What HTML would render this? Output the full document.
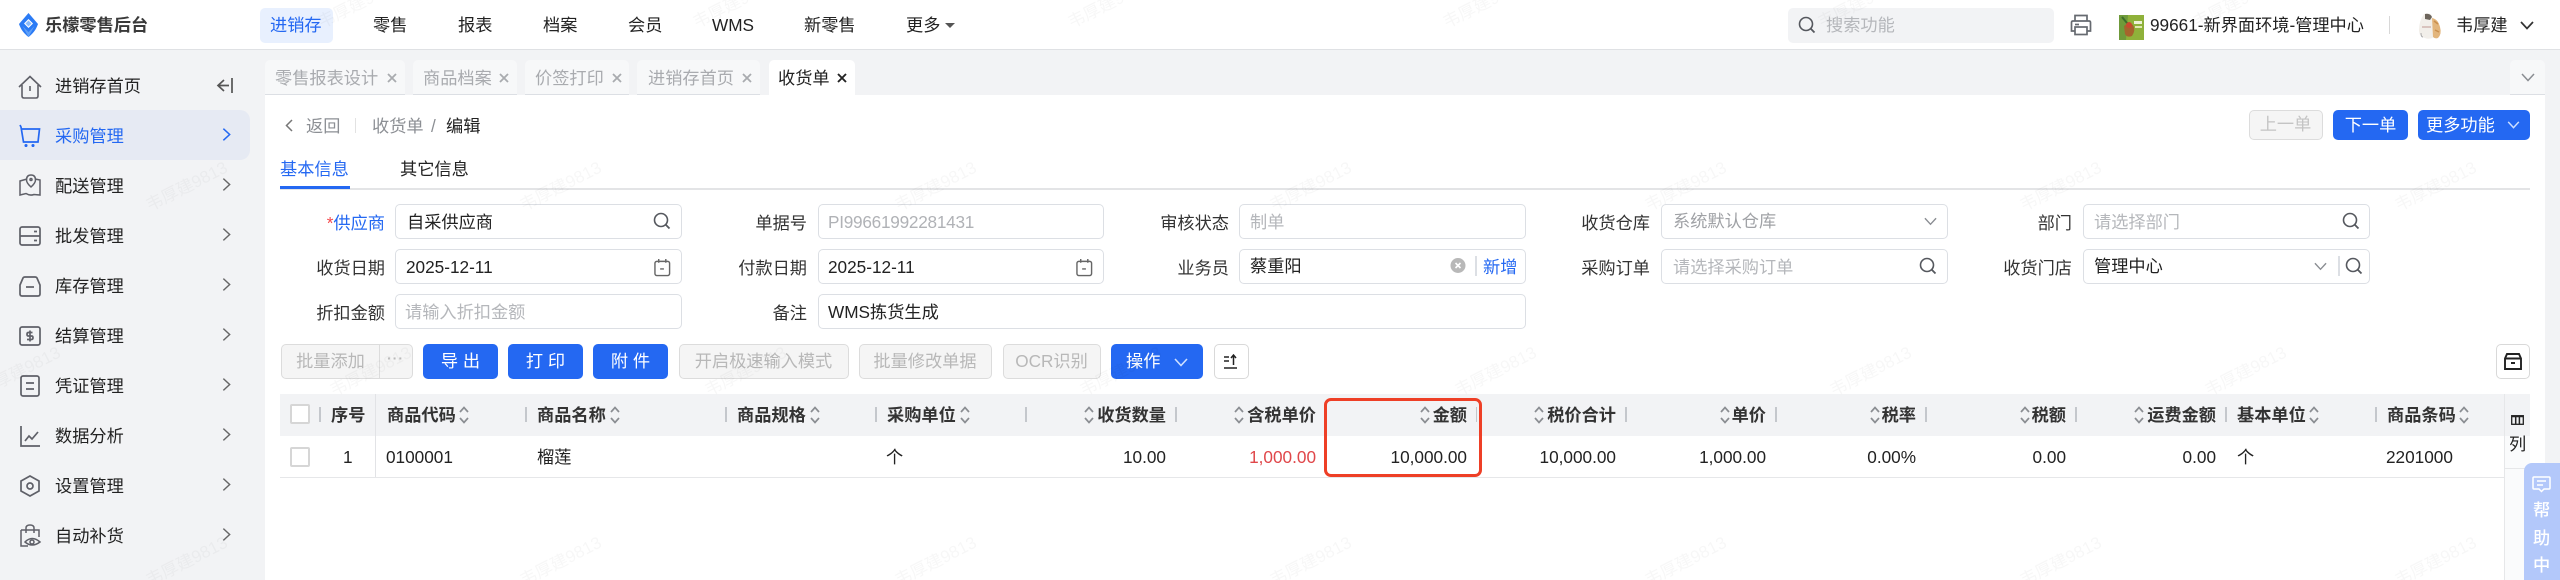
<!DOCTYPE html>
<html lang="zh-CN"><head><meta charset="utf-8"><title>收货单</title>
<style>
*{box-sizing:border-box;margin:0;padding:0}
html,body{width:2560px;height:580px;overflow:hidden;background:#fff}
body{position:relative;font-family:"Liberation Sans","Noto Sans CJK SC",sans-serif;font-size:17.2px;color:#222}
.a{position:absolute}
.t{position:absolute;white-space:nowrap;line-height:24px;height:24px}
.i{position:absolute;overflow:visible;fill:none}
.inp{position:absolute;height:35px;border:1.5px solid #dcdfe4;border-radius:5px;background:#fff}
.g{color:#b5b7bb}
.b{position:absolute;top:344px;height:35px;border-radius:5px;background:#2468f2;color:#fff;text-align:center;line-height:35px;white-space:nowrap}
.d{position:absolute;top:344px;height:35px;border-radius:5px;background:#f5f5f5;border:1.5px solid #dcdcdc;color:#b8b8b8;text-align:center;line-height:32px;white-space:nowrap}
.tab{position:absolute;top:60px;height:35px;background:#f7f8f9;border-bottom:1.5px solid #dcdfe4;border-radius:5px 5px 0 0}
.h{position:absolute;top:403px;font-weight:700;color:#333;line-height:24px;white-space:nowrap}
.c{position:absolute;top:445px;line-height:24px;white-space:nowrap;color:#222}
.sp{position:absolute;top:407px;width:1.5px;height:15px;background:#c4c7cc}
.cb{position:absolute;left:290px;width:20px;height:20px;background:#fff;border:2px solid #d6d6d6;border-radius:2px}
.wm{position:absolute;font-size:17px;color:rgba(30,30,40,.035);transform:rotate(-27deg);white-space:nowrap;line-height:20px;width:100px;text-align:center;pointer-events:none}
</style></head><body>
<svg width="0" height="0" style="position:absolute"><defs>
<symbol id="s" viewBox="0 0 10 20"><path d="M1 7L5 2.500L9 7M1 13L5 17.500L9 13" fill="none" stroke="#8a8d92" stroke-width="1.700"/></symbol>
<symbol id="q" viewBox="0 0 18 18"><circle cx="8" cy="8" r="6.500" fill="none" stroke="#55585e" stroke-width="1.600"/><path d="M12.800 12.800L16.500 16.500" stroke="#55585e" stroke-width="1.800" fill="none"/></symbol>
<symbol id="cal" viewBox="0 0 18 20"><rect x="1" y="3.500" width="15.500" height="15" rx="2" fill="none" stroke="#666" stroke-width="1.500"/><path d="M5 1v4M12.500 1v4M6.500 11.500h4" stroke="#666" stroke-width="1.500" fill="none"/></symbol>
<symbol id="ch" viewBox="0 0 10 16"><path d="M1.500 1.500L8.500 8L1.500 14.500" fill="none" stroke="#666" stroke-width="1.600"/></symbol>
<symbol id="dn" viewBox="0 0 14 9"><path d="M1 1L7 7.500L13 1" fill="none" stroke="#8a8d92" stroke-width="1.500"/></symbol>
</defs></svg>

<!-- sidebar and backgrounds -->
<div class="a" style="left:0;top:50px;width:2560px;height:530px;background:#f2f3f5"></div>
<div class="a" style="left:265px;top:95px;width:2280px;height:485px;background:#fff"></div>
<div class="a" style="left:0;top:0;width:2560px;height:50px;background:#fff;border-bottom:1.500px solid #dfe1e4"></div>

<!-- header -->
<svg class="i" style="left:19px;top:13px" width="19" height="24" viewBox="0 0 19 24"><path d="M9.500 0L19 11C17 17 13.500 21 9.500 24C5.500 21 2 17 0 11Z" fill="#2b7bf5"/><path d="M9.500 6L14 10.500L9.500 15L5 10.500Z" fill="#fff"/><path d="M9.500 7.500L12.500 10.500L9.500 13.500L6.500 10.500Z" fill="#8dbcfb"/><path d="M3.500 13L9.500 19L15.500 13L9.500 24Z" fill="#5d9ff8"/></svg>
<div class="t" style="left:45px;top:13px;font-weight:700;color:#3a3a3a">乐檬零售后台</div>
<div class="a" style="left:260px;top:8px;width:73px;height:35px;background:#e8f0fe;border-radius:5px"></div>
<div class="t" style="left:270px;top:13px;color:#2468f2">进销存</div>
<div class="t" style="left:373px;top:13px">零售</div>
<div class="t" style="left:458px;top:13px">报表</div>
<div class="t" style="left:543px;top:13px">档案</div>
<div class="t" style="left:628px;top:13px">会员</div>
<div class="t" style="left:712px;top:13px">WMS</div>
<div class="t" style="left:804px;top:13px">新零售</div>
<div class="t" style="left:906px;top:13px">更多</div>
<svg class="i" style="left:945px;top:23px" width="10" height="5" viewBox="0 0 10 5"><path d="M0 0H10L5 5Z" fill="#555"/></svg>
<div class="a" style="left:1788px;top:8px;width:266px;height:35px;background:#f2f3f5;border-radius:5px"></div>
<svg class="i" style="left:1798px;top:16px" width="18" height="18"><use href="#q"/></svg>
<div class="t g" style="left:1826px;top:13px">搜索功能</div>
<svg class="i" style="left:2070px;top:14px" width="22" height="22" viewBox="0 0 22 22" fill="none" stroke="#666a70" stroke-width="1.700"><path d="M5 7V1.500H17V7"/><path d="M5 17H1.500V8.500Q1.500 7 3 7H19Q20.500 7 20.500 8.500V17H17"/><rect x="5" y="13" width="12" height="7.500"/><path d="M5 10.500H9"/></svg>
<svg class="i" style="left:2119px;top:15px" width="25" height="25" viewBox="0 0 25 25"><rect width="25" height="25" fill="#8fb13a"/><path d="M0 0H9L7 25H0Z" fill="#6f9a3a"/><path d="M5 11Q10 7 14 10Q17 15 13 21Q8 23 6 19Z" fill="#a5642c"/><circle cx="10" cy="10" r="3" fill="#c9492f"/><rect x="15" y="6" width="8" height="3" fill="#eef2d5"/><rect x="16" y="11" width="7" height="2" fill="#dfe8b0"/><path d="M3 2L8 8" stroke="#3d6e2a" stroke-width="2"/></svg>
<div class="t" style="left:2150px;top:13px">99661-新界面环境-管理中心</div>
<div class="a" style="left:2389px;top:16px;width:1px;height:18px;background:#d8d8d8"></div>
<svg class="i" style="left:2417px;top:12px" width="25" height="28" viewBox="0 0 25 28"><path d="M7 2Q13 0 15 4L16 9L17 25Q12 28 8 26Q2 25 2 18Q2 9 7 2Z" fill="#f2efea"/><path d="M15 6Q21 7 23 15Q25 22 21 26Q18 27 16 25Z" fill="#e2b57c"/><path d="M17 9L21 12M18 18L22 20" stroke="#c98f4e" stroke-width="1.500"/><path d="M8 2Q13 1 15 5L13 8L8 7Z" fill="#6d655c"/><path d="M5 15H14" stroke="#c9a8a0" stroke-width="1.200"/><path d="M4 21Q4 25 6 25" stroke="#aaa" stroke-width="1"/></svg>
<div class="t" style="left:2456px;top:13px">韦厚建</div>
<svg class="i" style="left:2520px;top:21px" width="14" height="9" viewBox="0 0 14 9"><path d="M1 1L7 7.500L13 1" stroke="#333" stroke-width="1.700"/></svg>

<!-- sidebar -->
<div class="a" style="left:0;top:110px;width:250px;height:50px;background:#e6eaf3;border-radius:0 10px 10px 0"></div>
<svg class="i" style="left:18px;top:75px" width="24" height="24" viewBox="0 0 24 24" stroke="#5f6068" stroke-width="1.600"><path d="M1 12L12 1.500L23 12"/><path d="M4 10V21Q4 23 6 23H18Q20 23 20 21V10"/><path d="M12 11V16"/></svg>
<div class="t" style="left:55px;top:74px">进销存首页</div>
<svg class="i" style="left:216px;top:77px" width="17" height="17" viewBox="0 0 17 17" stroke="#555" stroke-width="1.700"><path d="M16 1V16M13 8.500H2M8 3L2 8.500L8 14"/></svg>
<svg class="i" style="left:19px;top:124px" width="22" height="23" viewBox="0 0 22 23" stroke="#2468f2" stroke-width="1.700"><path d="M1 1L2 3L4.500 18H19L20.500 5H3"/><circle cx="7" cy="21.500" r=".7" fill="#2468f2"/><circle cx="14" cy="21.500" r=".7" fill="#2468f2"/></svg>
<div class="t" style="left:55px;top:124px;color:#2468f2">采购管理</div>
<svg class="i" style="left:19px;top:174px" width="22" height="22" viewBox="0 0 22 22" stroke="#5f6068" stroke-width="1.500"><path d="M8 5L1 7V21L7 19.500Q11 22 15 20.500L21 21V6L16 5"/><path d="M12 1Q7.500 1 7.500 6Q7.500 9 12 13Q16.500 9 16.500 6Q16.500 1 12 1Z"/><circle cx="12" cy="5.500" r="1"/></svg>
<div class="t" style="left:55px;top:174px">配送管理</div>
<svg class="i" style="left:19px;top:226px" width="22" height="20" viewBox="0 0 22 20" stroke="#5f6068" stroke-width="1.700"><rect x="1" y="1" width="20" height="18" rx="2"/><path d="M1 10H21M15 5.500H18M15 14.500H18"/></svg>
<div class="t" style="left:55px;top:224px">批发管理</div>
<svg class="i" style="left:19px;top:276px" width="22" height="21" viewBox="0 0 22 21" stroke="#5f6068" stroke-width="1.700"><path d="M1 9L4 2Q4.500 1 6 1H16Q17.500 1 18 2L21 9V18Q21 20 19 20H3Q1 20 1 18Z"/><path d="M7 11H15"/></svg>
<div class="t" style="left:55px;top:274px">库存管理</div>
<svg class="i" style="left:19px;top:326px" width="22" height="20" viewBox="0 0 22 20" stroke="#5f6068" stroke-width="1.700"><rect x="1" y="1" width="20" height="18" rx="2"/><path d="M13.500 6.500H9.500Q8 6.500 8 8.200Q8 10 9.500 10H12.500Q14 10 14 11.800Q14 13.500 12.500 13.500H8M11 4.500V15.500"/></svg>
<div class="t" style="left:55px;top:324px">结算管理</div>
<svg class="i" style="left:20px;top:375px" width="20" height="22" viewBox="0 0 20 22" stroke="#5f6068" stroke-width="1.700"><rect x="1" y="1" width="18" height="20" rx="2"/><path d="M6 8H14M6 14H14"/></svg>
<div class="t" style="left:55px;top:374px">凭证管理</div>
<svg class="i" style="left:20px;top:425px" width="20" height="22" viewBox="0 0 20 22" stroke="#5f6068" stroke-width="1.700"><path d="M1 1V21H20"/><path d="M5 16L9 11L12 14L18 7"/></svg>
<div class="t" style="left:55px;top:424px">数据分析</div>
<svg class="i" style="left:20px;top:475px" width="20" height="22" viewBox="0 0 20 22" stroke="#5f6068" stroke-width="1.700"><path d="M10 1L19 6V16L10 21L1 16V6Z"/><circle cx="10" cy="11" r="3"/></svg>
<div class="t" style="left:55px;top:474px">设置管理</div>
<svg class="i" style="left:19px;top:524px" width="22" height="24" viewBox="0 0 22 24" stroke="#5f6068" stroke-width="1.500"><path d="M2 6H20V13M2 6V22H9"/><path d="M7 9V4Q7 1 11 1Q15 1 15 4V9"/><path d="M6 18Q13 11 21 18Q13 24 6 18Z"/><circle cx="13" cy="18" r="2"/></svg>
<div class="t" style="left:55px;top:524px">自动补货</div>
<svg class="i" style="left:222px;top:127px" width="9" height="15" viewBox="0 0 10 16"><path d="M1.500 1.500L8.500 8L1.500 14.500" stroke="#2468f2" stroke-width="1.700"/></svg>
<svg class="i" style="left:222px;top:177px" width="9" height="15"><use href="#ch"/></svg>
<svg class="i" style="left:222px;top:227px" width="9" height="15"><use href="#ch"/></svg>
<svg class="i" style="left:222px;top:277px" width="9" height="15"><use href="#ch"/></svg>
<svg class="i" style="left:222px;top:327px" width="9" height="15"><use href="#ch"/></svg>
<svg class="i" style="left:222px;top:377px" width="9" height="15"><use href="#ch"/></svg>
<svg class="i" style="left:222px;top:427px" width="9" height="15"><use href="#ch"/></svg>
<svg class="i" style="left:222px;top:477px" width="9" height="15"><use href="#ch"/></svg>
<svg class="i" style="left:222px;top:527px" width="9" height="15"><use href="#ch"/></svg>

<!-- tabs -->
<div class="tab" style="left:265px;width:140px"></div>
<div class="t" style="left:275px;top:66px;color:#a9abaf">零售报表设计</div>
<div class="tab" style="left:413px;width:104px"></div>
<div class="t" style="left:423px;top:66px;color:#a9abaf">商品档案</div>
<div class="tab" style="left:525px;width:104px"></div>
<div class="t" style="left:535px;top:66px;color:#a9abaf">价签打印</div>
<div class="tab" style="left:637px;width:123px"></div>
<div class="t" style="left:648px;top:66px;color:#a9abaf">进销存首页</div>
<div class="a" style="left:769px;top:60px;width:86px;height:35px;background:#fff;border-radius:5px 5px 0 0"></div>
<div class="t" style="left:778px;top:66px">收货单</div>
<svg class="i" style="left:387px;top:73px" width="10" height="10" stroke="#a9abaf" stroke-width="1.800"><path d="M1 1L9 9M9 1L1 9"/></svg>
<svg class="i" style="left:499px;top:73px" width="10" height="10" stroke="#a9abaf" stroke-width="1.800"><path d="M1 1L9 9M9 1L1 9"/></svg>
<svg class="i" style="left:612px;top:73px" width="10" height="10" stroke="#a9abaf" stroke-width="1.800"><path d="M1 1L9 9M9 1L1 9"/></svg>
<svg class="i" style="left:742px;top:73px" width="10" height="10" stroke="#a9abaf" stroke-width="1.800"><path d="M1 1L9 9M9 1L1 9"/></svg>
<svg class="i" style="left:837px;top:73px" width="10" height="10" stroke="#222" stroke-width="1.900"><path d="M1 1L9 9M9 1L1 9"/></svg>
<div class="tab" style="left:2510px;width:35px"></div>
<svg class="i" style="left:2521px;top:73px" width="14" height="9"><use href="#dn"/></svg>

<!-- breadcrumb -->
<svg class="i" style="left:285px;top:119px" width="8" height="13" stroke="#777" stroke-width="1.500"><path d="M7 1L1.500 6.500L7 12"/></svg>
<div class="t" style="left:306px;top:114px;color:#8c8f94">返回</div>
<div class="a" style="left:355px;top:118px;width:1px;height:15px;background:#e2e2e2"></div>
<div class="t" style="left:372px;top:114px;color:#8c8f94">收货单</div>
<div class="t" style="left:431px;top:114px;color:#8c8f94">/</div>
<div class="t" style="left:446px;top:114px">编辑</div>
<div class="a" style="left:2248.500px;top:110px;width:74px;height:30px;background:#f5f5f5;border:1.500px solid #dcdcdc;border-radius:5px;color:#c4c4c4;text-align:center;line-height:27px">上一单</div>
<div class="a" style="left:2333px;top:110px;width:75px;height:30px;background:#2468f2;border-radius:5px;color:#fff;text-align:center;line-height:30px">下一单</div>
<div class="a" style="left:2418px;top:110px;width:112px;height:30px;background:#2468f2;border-radius:5px;color:#fff;line-height:30px;padding-left:8px">更多功能</div>
<svg class="i" style="left:2507px;top:121px" width="13" height="8" viewBox="0 0 14 9"><path d="M1 1L7 7.500L13 1" stroke="#cfe0ff" stroke-width="1.600"/></svg>

<!-- page tabs -->
<div class="t" style="left:280px;top:157px;color:#2468f2">基本信息</div>
<div class="t" style="left:400px;top:157px">其它信息</div>
<div class="a" style="left:280px;top:188px;width:2250px;height:1.500px;background:#e3e4e6"></div>
<div class="a" style="left:280px;top:186px;width:70px;height:3px;background:#2468f2"></div>

<!-- form labels -->
<div class="t" style="right:2175px;top:211px;color:#2468f2"><span style="color:#f5484b">*</span>供应商</div>
<div class="t" style="right:2175px;top:256px;color:#333">收货日期</div>
<div class="t" style="right:2175px;top:301px;color:#333">折扣金额</div>
<div class="t" style="right:1753px;top:211px;color:#333">单据号</div>
<div class="t" style="right:1753px;top:256px;color:#333">付款日期</div>
<div class="t" style="right:1753px;top:301px;color:#333">备注</div>
<div class="t" style="right:1331px;top:211px;color:#333">审核状态</div>
<div class="t" style="right:1331px;top:256px;color:#333">业务员</div>
<div class="t" style="right:910px;top:211px;color:#333">收货仓库</div>
<div class="t" style="right:910px;top:256px;color:#333">采购订单</div>
<div class="t" style="right:488px;top:211px;color:#333">部门</div>
<div class="t" style="right:488px;top:256px;color:#333">收货门店</div>

<!-- inputs -->
<div class="inp" style="left:395px;top:204px;width:287px"></div>
<div class="t" style="left:407px;top:210px">自采供应商</div>
<svg class="i" style="left:653px;top:212px" width="18" height="18"><use href="#q"/></svg>
<div class="inp" style="left:395px;top:249px;width:287px"></div>
<div class="t" style="left:406px;top:255px">2025-12-11</div>
<svg class="i" style="left:654px;top:258px" width="17" height="19"><use href="#cal"/></svg>
<div class="inp" style="left:395px;top:294px;width:287px"></div>
<div class="t g" style="left:405px;top:300px">请输入折扣金额</div>

<div class="inp" style="left:817.500px;top:204px;width:286px"></div>
<div class="t" style="left:828px;top:210px;color:#b0b2b6;letter-spacing:-.25px">PI99661992281431</div>
<div class="inp" style="left:817.500px;top:249px;width:286px"></div>
<div class="t" style="left:828px;top:255px">2025-12-11</div>
<svg class="i" style="left:1076px;top:258px" width="17" height="19"><use href="#cal"/></svg>
<div class="inp" style="left:817.500px;top:294px;width:708px"></div>
<div class="t" style="left:828px;top:300px">WMS拣货生成</div>

<div class="inp" style="left:1239px;top:204px;width:287px"></div>
<div class="t g" style="left:1250px;top:210px">制单</div>
<div class="inp" style="left:1239px;top:249px;width:287px"></div>
<div class="t" style="left:1250px;top:254px">蔡重阳</div>
<svg class="i" style="left:1450px;top:257px" width="16" height="17" viewBox="0 0 16 17"><ellipse cx="8" cy="8.500" rx="7.500" ry="7.500" fill="#b8b8b8"/><path d="M5.500 6L10.500 11M10.500 6L5.500 11" stroke="#fff" stroke-width="1.600"/></svg>
<div class="a" style="left:1475px;top:256px;width:1.500px;height:20px;background:#dcdfe4"></div>
<div class="t" style="left:1483px;top:255px;color:#2468f2">新增</div>

<div class="inp" style="left:1661px;top:204px;width:287px"></div>
<div class="t" style="left:1673px;top:209px;color:#a0a2a6">系统默认仓库</div>
<svg class="i" style="left:1924px;top:217px" width="13" height="9"><use href="#dn"/></svg>
<div class="inp" style="left:1661px;top:249px;width:287px"></div>
<div class="t g" style="left:1673px;top:255px">请选择采购订单</div>
<svg class="i" style="left:1919px;top:257px" width="18" height="18"><use href="#q"/></svg>

<div class="inp" style="left:2083px;top:204px;width:287px"></div>
<div class="t g" style="left:2094px;top:210px">请选择部门</div>
<svg class="i" style="left:2342px;top:212px" width="18" height="18"><use href="#q"/></svg>
<div class="inp" style="left:2083px;top:249px;width:287px"></div>
<div class="t" style="left:2094px;top:254px">管理中心</div>
<svg class="i" style="left:2314px;top:262px" width="13" height="9"><use href="#dn"/></svg>
<div class="a" style="left:2338px;top:256px;width:1.500px;height:20px;background:#dcdfe4"></div>
<svg class="i" style="left:2345px;top:257px" width="18" height="18"><use href="#q"/></svg>

<!-- toolbar -->
<div class="d" style="left:280.500px;width:99px;border-radius:5px 0 0 5px;border-right:none">批量添加</div>
<div class="d" style="left:378.500px;width:34px;border-radius:0 5px 5px 0;letter-spacing:1px;line-height:26px;font-weight:700;color:#bbb;font-size:14px">···</div>
<div class="b" style="left:423px;width:75px">导 出</div>
<div class="b" style="left:508px;width:75px">打 印</div>
<div class="b" style="left:593px;width:75px">附 件</div>
<div class="d" style="left:678.500px;width:170px">开启极速输入模式</div>
<div class="d" style="left:858.500px;width:133px">批量修改单据</div>
<div class="d" style="left:1002.500px;width:98px">OCR识别</div>
<div class="b" style="left:1111px;width:92px;text-align:left;padding-left:15px">操作</div>
<svg class="i" style="left:1174px;top:358px" width="14" height="9" viewBox="0 0 14 9"><path d="M1 1L7 7.500L13 1" stroke="#cfe0ff" stroke-width="1.600"/></svg>
<div class="a" style="left:1213.500px;top:344px;width:35px;height:35px;background:#fff;border:1.500px solid #d9d9d9;border-radius:5px"></div>
<svg class="i" style="left:1223px;top:354px" width="15" height="15" viewBox="0 0 15 15" stroke="#222" stroke-width="1.500"><path d="M1 3H6M1 7H6M1 14H14M10.500 11V1M8 4L10.500 1L13 4"/></svg>
<div class="a" style="left:2495.500px;top:344px;width:34px;height:35px;background:#fff;border:1.500px solid #d9d9d9;border-radius:5px"></div>
<svg class="i" style="left:2504px;top:353px" width="18" height="17" viewBox="0 0 18 17" stroke="#222" stroke-width="1.900"><path d="M3 1H15L17 5.500V16H1V5.500Z"/><path d="M1 5.500H17M7 10H11"/></svg>

<!-- table -->
<div class="a" style="left:280px;top:394px;width:2250px;height:42px;background:#f2f3f5"></div>
<div class="a" style="left:280px;top:476.500px;width:2224.500px;height:1.500px;background:#e6e7e9"></div>
<div class="a" style="left:375px;top:394px;width:1px;height:83px;background:#e2e3e6"></div>
<div class="a" style="left:2504px;top:394px;width:1px;height:186px;background:#e6e7e9"></div>
<div class="a" style="left:2505px;top:436px;width:25px;height:144px;background:#fafbfc"></div>
<div class="a" style="left:2505px;top:468px;width:25px;height:1px;background:#e6e7e9"></div>
<div class="cb" style="top:404px"></div>
<div class="cb" style="top:446.500px"></div>
<div class="sp" style="left:319px"></div>
<div class="h" style="left:331px">序号</div>
<div class="h" style="left:387px">商品代码</div>
<div class="sp" style="left:525px"></div>
<div class="h" style="left:537px">商品名称</div>
<div class="sp" style="left:725px"></div>
<div class="h" style="left:737px">商品规格</div>
<div class="sp" style="left:875px"></div>
<div class="h" style="left:887px">采购单位</div>
<div class="sp" style="left:1025px"></div>
<div class="h" style="right:1394px">收货数量</div>
<div class="sp" style="left:1175px"></div>
<div class="h" style="right:1244px">含税单价</div>
<div class="h" style="right:1093px">金额</div>
<div class="sp" style="left:1475.500px"></div>
<div class="h" style="right:944px">税价合计</div>
<div class="sp" style="left:1625px"></div>
<div class="h" style="right:794px">单价</div>
<div class="sp" style="left:1775px"></div>
<div class="h" style="right:644px">税率</div>
<div class="sp" style="left:1925px"></div>
<div class="h" style="right:494px">税额</div>
<div class="sp" style="left:2075px"></div>
<div class="h" style="right:344px">运费金额</div>
<div class="sp" style="left:2225px"></div>
<div class="h" style="left:2237px">基本单位</div>
<div class="sp" style="left:2375px"></div>
<div class="h" style="left:2387px">商品条码</div>
<svg class="i" style="left:459px;top:405px" width="10" height="20"><use href="#s"/></svg>
<svg class="i" style="left:610px;top:405px" width="10" height="20"><use href="#s"/></svg>
<svg class="i" style="left:810px;top:405px" width="10" height="20"><use href="#s"/></svg>
<svg class="i" style="left:960px;top:405px" width="10" height="20"><use href="#s"/></svg>
<svg class="i" style="left:1084px;top:405px" width="10" height="20"><use href="#s"/></svg>
<svg class="i" style="left:1234px;top:405px" width="10" height="20"><use href="#s"/></svg>
<svg class="i" style="left:1420px;top:405px" width="10" height="20"><use href="#s"/></svg>
<svg class="i" style="left:1534px;top:405px" width="10" height="20"><use href="#s"/></svg>
<svg class="i" style="left:1720px;top:405px" width="10" height="20"><use href="#s"/></svg>
<svg class="i" style="left:1870px;top:405px" width="10" height="20"><use href="#s"/></svg>
<svg class="i" style="left:2020px;top:405px" width="10" height="20"><use href="#s"/></svg>
<svg class="i" style="left:2134px;top:405px" width="10" height="20"><use href="#s"/></svg>
<svg class="i" style="left:2309px;top:405px" width="10" height="20"><use href="#s"/></svg>
<svg class="i" style="left:2459px;top:405px" width="10" height="20"><use href="#s"/></svg>
<div class="c" style="left:343px">1</div>
<div class="c" style="left:386px">0100001</div>
<div class="c" style="left:537px">榴莲</div>
<div class="c" style="left:886px">个</div>
<div class="c" style="right:1394px">10.00</div>
<div class="c" style="right:1244px;color:#e0474a">1,000.00</div>
<div class="c" style="right:1093px">10,000.00</div>
<div class="c" style="right:944px">10,000.00</div>
<div class="c" style="right:794px">1,000.00</div>
<div class="c" style="right:644px">0.00%</div>
<div class="c" style="right:494px">0.00</div>
<div class="c" style="right:344px">0.00</div>
<div class="c" style="left:2237px">个</div>
<div class="c" style="left:2386px">2201000</div>
<div class="a" style="left:1323.500px;top:398px;width:158px;height:79px;border:3.500px solid #ee3f26;border-radius:7px"></div>
<svg class="i" style="left:2511px;top:415px" width="13" height="10" viewBox="0 0 13 10" stroke="#222" stroke-width="1.300"><rect x=".7" y=".7" width="11.600" height="8.600"/><path d="M4.700 .7V9.300M8.400 .7V9.300M.7 1.500H12.300" stroke-width="1.500"/></svg>
<div class="t" style="left:2509px;top:432px">列</div>

<!-- help -->
<div class="a" style="left:2524px;top:463px;width:36px;height:117px;background:#b3c8fa;border-radius:8px 0 0 0"></div>
<svg class="i" style="left:2532px;top:476px" width="19" height="17" viewBox="0 0 19 17" stroke="#fff" stroke-width="1.500"><path d="M2 1H17Q18 1 18 2V12Q18 13 17 13H12L9.500 15.500L7 13H2Q1 13 1 12V2Q1 1 2 1Z"/><path d="M5 5H14M5 9H11"/></svg>
<div class="t" style="left:2533px;top:498px;color:#fff;font-weight:500">帮</div>
<div class="t" style="left:2533px;top:526px;color:#fff;font-weight:500">助</div>
<div class="t" style="left:2533px;top:553px;color:#fff;font-weight:500">中</div>

<!-- watermarks -->
<div class="wm" style="left:137px;top:177px">韦厚建9813</div>
<div class="wm" style="left:511px;top:177px">韦厚建9813</div>
<div class="wm" style="left:886px;top:177px">韦厚建9813</div>
<div class="wm" style="left:1261px;top:177px">韦厚建9813</div>
<div class="wm" style="left:1636px;top:177px">韦厚建9813</div>
<div class="wm" style="left:2011px;top:177px">韦厚建9813</div>
<div class="wm" style="left:2386px;top:177px">韦厚建9813</div>
<div class="wm" style="left:137px;top:552px">韦厚建9813</div>
<div class="wm" style="left:511px;top:552px">韦厚建9813</div>
<div class="wm" style="left:886px;top:552px">韦厚建9813</div>
<div class="wm" style="left:1261px;top:552px">韦厚建9813</div>
<div class="wm" style="left:1636px;top:552px">韦厚建9813</div>
<div class="wm" style="left:2011px;top:552px">韦厚建9813</div>
<div class="wm" style="left:2386px;top:552px">韦厚建9813</div>
<div class="wm" style="left:-30px;top:362px">韦厚建9813</div>
<div class="wm" style="left:321px;top:362px">韦厚建9813</div>
<div class="wm" style="left:696px;top:362px">韦厚建9813</div>
<div class="wm" style="left:1071px;top:362px">韦厚建9813</div>
<div class="wm" style="left:1446px;top:362px">韦厚建9813</div>
<div class="wm" style="left:1821px;top:362px">韦厚建9813</div>
<div class="wm" style="left:2196px;top:362px">韦厚建9813</div>
<div class="wm" style="left:309px;top:-6px">韦厚建9813</div>
<div class="wm" style="left:684px;top:-6px">韦厚建9813</div>
<div class="wm" style="left:1059px;top:-6px">韦厚建9813</div>
<div class="wm" style="left:1434px;top:-6px">韦厚建9813</div>
<div class="wm" style="left:1809px;top:-6px">韦厚建9813</div>
<div class="wm" style="left:2184px;top:-6px">韦厚建9813</div>
</body></html>
